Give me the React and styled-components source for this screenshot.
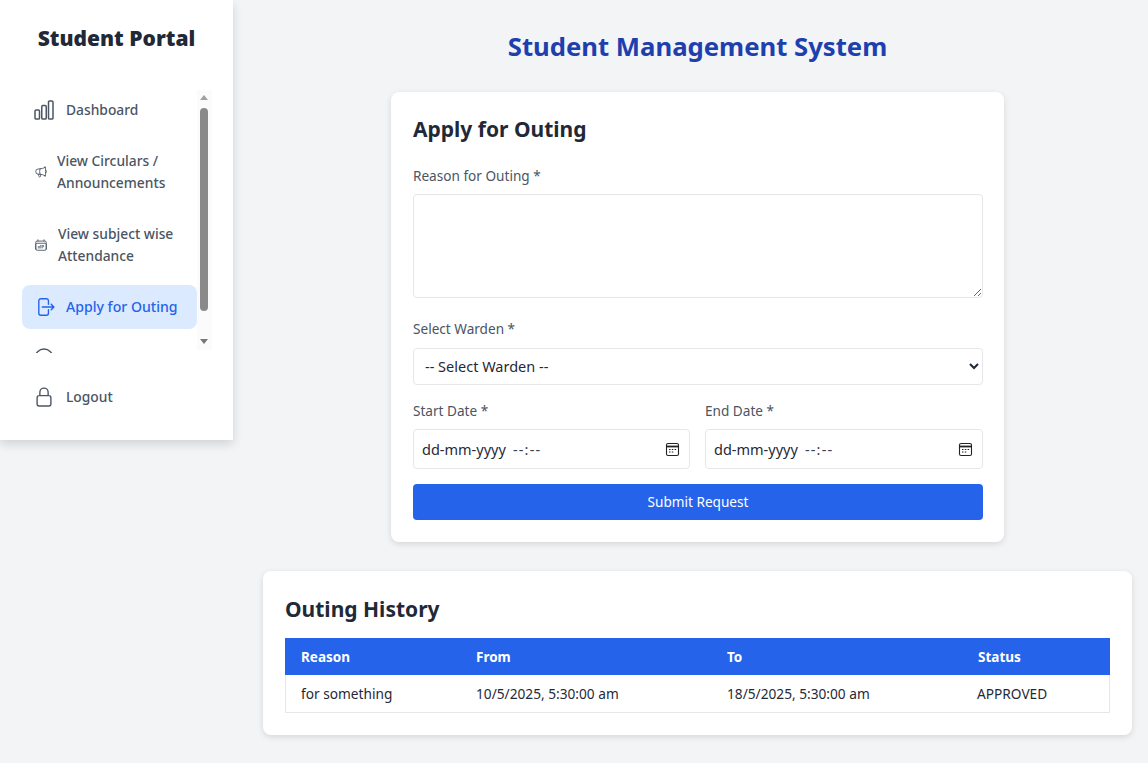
import React from "react";
import styled, { createGlobalStyle } from "styled-components";
import {
  HiOutlineChartBar,
  HiOutlineMegaphone,
  HiOutlineCalendarDays,
  HiOutlineArrowRightOnRectangle,
  HiOutlineLockClosed,
} from "react-icons/hi2";

const FONT = `"Noto Sans", "Open Sans", "Liberation Sans", sans-serif`;

const Global = createGlobalStyle`
  html, body { margin: 0; padding: 0; background: #f3f4f6; }
  body { font-family: ${FONT}; color: #1f2937; }
  * { box-sizing: border-box; }
`;

const Page = styled.div`
  display: flex;
  align-items: flex-start;
  width: 1148px;
  height: 763px;
  overflow: hidden;
`;

const Sidebar = styled.aside`
  flex: 0 0 233px;
  height: 440px;
  background: #fff;
  box-shadow: 0 4px 10px rgba(0, 0, 0, 0.14);
  padding: 24px 0 0 22px;
`;

const Brand = styled.h1`
  margin: 0 0 36px -22px;
  font-size: 21px;
  line-height: 28px;
  font-weight: 900;
  color: #1f2937;
  text-align: center;
`;

const NavViewport = styled.div`
  position: relative;
  width: 190px;
  height: 265px;
  overflow: hidden;
`;

const NavList = styled.div`
  display: flex;
  flex-direction: column;
  gap: 7px;
  width: 175px;
`;

const NavItem = styled.div`
  display: flex;
  align-items: center;
  gap: ${(p) => p.$gap ?? 12}px;
  padding: 11px 12px 11px ${(p) => p.$pad ?? 12}px;
  border-radius: 8px;
  font-size: ${(p) => (p.$active ? 14.1 : 13.8)}px;
  line-height: 22px;
  font-weight: 500;
  color: ${(p) => (p.$active ? "#2563eb" : "#4b5563")};
  background: ${(p) => (p.$active ? "#dbeafe" : "transparent")};
  svg {
    flex: 0 0 auto;
    width: ${(p) => p.$icon || 20}px;
    height: ${(p) => p.$icon || 20}px;
    margin: -2px 0;
  }
`;

const ClippedIcon = styled.div`
  padding: 12px 12px 0 12px;
  color: #4b5563;
  height: 30px;
  svg { width: 20px; height: 20px; display: block; }
`;

const LogoutRow = styled.div`
  width: 175px;
  margin-top: 22px;
`;

const ScrollTrack = styled.div`
  position: absolute;
  top: 2px;
  right: 0;
  width: 15px;
  height: 260px;
  background: #fbfbfb;
`;

const ScrollThumb = styled.div`
  position: absolute;
  top: 18px;
  left: 3px;
  width: 8px;
  height: 203px;
  border-radius: 4px;
  background: #8a8a8a;
`;

const ScrollArrow = styled.div`
  position: absolute;
  left: 3px;
  ${(p) => (p.$down ? "bottom: 6px;" : "top: 5px;")}
  width: 0;
  height: 0;
  border-left: 4px solid transparent;
  border-right: 4px solid transparent;
  ${(p) => (p.$down ? "border-top: 5px solid #777;" : "border-bottom: 5px solid #a0a0a0;")}
`;

const Main = styled.main`
  flex: 1;
  min-width: 0;
  display: flex;
  flex-direction: column;
  align-items: center;
  padding: 28px 16px 0 30px;
`;

const PageTitle = styled.h2`
  margin: 0 0 26px;
  font-size: 25.7px;
  line-height: 38px;
  font-weight: 700;
  color: #1e40af;
`;

const Card = styled.section`
  width: ${(p) => p.$width};
  background: #fff;
  border-radius: 8px;
  padding: 22px;
  box-shadow: 0 2px 6px rgba(0, 0, 0, 0.12);
`;

const FormCard = styled(Card)`
  margin-bottom: 29px;
  height: 450px;
  padding-right: 21px;
`;

const CardTitle = styled.h3`
  margin: 0 0 ${(p) => p.$after}px;
  font-size: 21px;
  line-height: ${(p) => p.$lh}px;
  font-weight: 700;
  color: #1f2937;
`;

const Label = styled.label`
  display: block;
  font-size: 13.6px;
  line-height: 20px;
  color: #4b5563;
  margin-bottom: 8px;
`;

const TextArea = styled.textarea`
  display: block;
  width: 100%;
  height: 104px;
  margin-bottom: 21px;
  border: 1px solid #e5e7eb;
  border-radius: 4px;
  background: #fff;
  outline: none;
`;

const Select = styled.select`
  display: block;
  width: 100%;
  height: 37px;
  margin: 9px 0 16px;
  padding: 0 7px 2px;
  border: 1px solid #e5e7eb;
  border-radius: 4px;
  background: #fff;
  font-family: ${FONT};
  font-size: 14.5px;
  color: #1f2937;
`;

const DateRow = styled.div`
  display: grid;
  grid-template-columns: 277px 278px;
  gap: 15px;
  margin-bottom: 15px;
`;

const DateField = styled.div`
  display: flex;
  align-items: center;
  height: 40px;
  padding: 0 9px 0 8px;
  border: 1px solid #e5e7eb;
  border-radius: 4px;
  font-size: 14.5px;
  color: #1f2937;
  svg { width: 15px; height: 15px; display: block; margin-left: auto; }
`;

const TimeMask = styled.span`
  margin-left: 7px;
  letter-spacing: 1.2px;
  color: #374151;
`;

const Submit = styled.button`
  display: block;
  width: 100%;
  height: 36px;
  padding: 0 0 2px;
  border: 0;
  border-radius: 4px;
  background: #2563eb;
  color: #fff;
  font-family: ${FONT};
  font-size: 13.6px;
`;

const Table = styled.table`
  width: 825px;
  border-collapse: separate;
  border-spacing: 0;
  table-layout: fixed;
  font-size: 13.7px;
`;

const Th = styled.th`
  width: ${(p) => p.$w}px;
  height: 37px;
  padding: 0 15px 0 16px;
  text-align: left;
  font-weight: 700;
  font-size: 13.5px;
  color: #fff;
  background: #2563eb;
`;

const Td = styled.td`
  height: 38px;
  padding: 0 15px 0 16px;
  color: #1f2937;
  border-bottom: 1px solid #e5e7eb;
  &:first-child { border-left: 1px solid #e5e7eb; padding-left: 15px; }
  &:last-child { border-right: 1px solid #e5e7eb; padding-left: 15px; }
`;

const CalendarGlyph = () => (
  <svg viewBox="0 0 15 15" fill="none" stroke="#222" strokeWidth="1.1">
    <rect x="1.5" y="1.5" width="12" height="12" rx="1.6" />
    <path d="M1.5 4.5h12" strokeWidth="1.8" />
    <path d="M4 7.5h1.5M6.8 7.5h1.5M9.6 7.5h1.5M4 10h1.5M6.8 10h1.5" />
  </svg>
);

const DateMask = () => (
  <DateField>
    <span>dd-mm-yyyy</span>
    <TimeMask>--:--</TimeMask>
    <CalendarGlyph />
  </DateField>
);

const RingIcon = () => (
  <svg viewBox="0 0 20 20" fill="none" stroke="currentColor" strokeWidth="1.4">
    <circle cx="10" cy="10" r="9" />
  </svg>
);

export default function App() {
  return (
    <>
      <Global />
      <Page>
        <Sidebar>
          <Brand>Student Portal</Brand>
          <NavViewport>
            <NavList>
              <NavItem $icon={24} $pad={10} $gap={10}>
                <HiOutlineChartBar />
                <span>Dashboard</span>
              </NavItem>
              <NavItem $icon={14} $gap={9}>
                <HiOutlineMegaphone />
                <span>View Circulars / Announcements</span>
              </NavItem>
              <NavItem $icon={14} $gap={10}>
                <HiOutlineCalendarDays />
                <span>View subject wise Attendance</span>
              </NavItem>
              <NavItem $active $icon={22} $pad={12} $gap={10}>
                <HiOutlineArrowRightOnRectangle />
                <span>Apply for Outing</span>
              </NavItem>
              <ClippedIcon>
                <RingIcon />
              </ClippedIcon>
            </NavList>
            <ScrollTrack>
              <ScrollArrow />
              <ScrollThumb />
              <ScrollArrow $down />
            </ScrollTrack>
          </NavViewport>
          <LogoutRow>
            <NavItem $icon={22} $pad={11} $gap={11}>
              <HiOutlineLockClosed />
              <span>Logout</span>
            </NavItem>
          </LogoutRow>
        </Sidebar>
        <Main>
          <PageTitle>Student Management System</PageTitle>
          <FormCard $width="613px">
            <CardTitle $after={22} $lh={30}>Apply for Outing</CardTitle>
            <Label>Reason for Outing *</Label>
            <TextArea />
            <Label>Select Warden *</Label>
            <Select defaultValue="">
              <option value="">-- Select Warden --</option>
            </Select>
            <DateRow>
              <div>
                <Label>Start Date *</Label>
                <DateMask />
              </div>
              <div>
                <Label>End Date *</Label>
                <DateMask />
              </div>
            </DateRow>
            <Submit>Submit Request</Submit>
          </FormCard>
          <Card $width="869px">
            <CardTitle $after={13} $lh={32}>Outing History</CardTitle>
            <Table>
              <thead>
                <tr>
                  <Th $w={175}>Reason</Th>
                  <Th $w={251}>From</Th>
                  <Th $w={251}>To</Th>
                  <Th $w={148}>Status</Th>
                </tr>
              </thead>
              <tbody>
                <tr>
                  <Td>for something</Td>
                  <Td>10/5/2025, 5:30:00 am</Td>
                  <Td>18/5/2025, 5:30:00 am</Td>
                  <Td>APPROVED</Td>
                </tr>
              </tbody>
            </Table>
          </Card>
        </Main>
      </Page>
    </>
  );
}
